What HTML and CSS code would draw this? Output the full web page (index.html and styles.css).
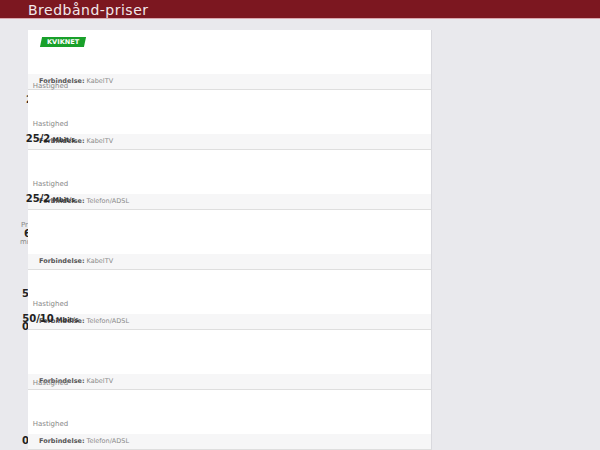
FILE: index.html
```html
<!DOCTYPE html>
<html lang="no">
<head>
    <meta charset="UTF-8">
    <meta name="viewport" content="width=device-width, initial-scale=1.0">
    <title>Bredbånd-priser</title>
    <link rel="stylesheet" href="styles.css">
</head>
<body>

<header class="topbar">
    <h1 class="title">Bredbånd-priser</h1>
</header>

<main class="offers">
    <article class="offer">
        <div class="offer-body"><span class="badge"><span>KVIKNET</span></span></div>
        <div class="offer-foot"><b>Forbindelse:</b> KabelTV</div>
        <div class="spec spec-low"><div class="spec-label">Hastighed</div></div>
        <span class="peek peek-c1">25/2</span>
    </article>

    <article class="offer">
        <div class="offer-body"></div>
        <div class="offer-foot"><b>Forbindelse:</b> KabelTV</div>
        <div class="spec">
            <div class="spec-label">Hastighed</div>
            <div class="spec-value">25/2<small> Mbit/s</small></div>
        </div>
    </article>

    <article class="offer">
        <div class="offer-body"></div>
        <div class="offer-foot"><b>Forbindelse:</b> Telefon/ADSL</div>
        <div class="spec">
            <div class="spec-label">Hastighed</div>
            <div class="spec-value">25/2<small> Mbit/s</small></div>
        </div>
    </article>

    <article class="offer">
        <div class="offer-body"></div>
        <div class="offer-foot"><b>Forbindelse:</b> KabelTV</div>
        <span class="peek peek-text peek-c4a">Pris</span>
        <span class="peek peek-c4b">649,-</span>
        <span class="peek peek-text peek-c4c">mnd</span>
    </article>

    <article class="offer">
        <div class="offer-body"></div>
        <div class="offer-foot"><b>Forbindelse:</b> Telefon/ADSL</div>
        <div class="spec">
            <div class="spec-label">Hastighed</div>
            <div class="spec-value">50/10<small> Mbit/s</small></div>
        </div>
        <span class="peek peek-c5a">5</span>
        <span class="peek peek-c5b">0</span>
    </article>

    <article class="offer">
        <div class="offer-body"></div>
        <div class="offer-foot"><b>Forbindelse:</b> KabelTV</div>
        <div class="spec spec-mid"><div class="spec-label">Hastighed</div></div>
    </article>

    <article class="offer">
        <div class="offer-body"></div>
        <div class="offer-foot"><b>Forbindelse:</b> Telefon/ADSL</div>
        <div class="spec"><div class="spec-label">Hastighed</div></div>
        <span class="peek peek-c7">0</span>
    </article>
</main>

</body>
</html>
```

FILE: styles.css
```css
* {
    margin: 0;
    padding: 0;
    box-sizing: border-box;
}

html, body {
    width: 100%;
    height: 100%;
    overflow: hidden;
}

body {
    font-family: "DejaVu Sans", sans-serif;
    background-color: #e9e9ed;
}

/* Top bar */
.topbar {
    height: 19px;
    background-color: #7c1720;
    border-bottom: 1px solid #d9a7ae;
}

.title {
    padding-left: 28px;
    height: 18px;
    font-size: 14px;
    font-weight: normal;
    line-height: 20px;
    letter-spacing: 0.5px;
    color: #f2e8ea;
}

/* Offer list */
.offers {
    display: flex;
    flex-direction: column;
    width: 404px;
    margin: 11px 0 0 28px;
}

.offer {
    position: relative;
    display: flex;
    flex-direction: column;
    background-color: #fff;
    border-right: 1px solid #d9d9de;
    border-bottom: 1px solid #dedede;
}

.offer-body {
    height: 44px;
    padding: 7px 0 0 13px;
    font-size: 6.6px;
    line-height: 10px;
}

.offer-foot {
    height: 15px;
    padding-left: 11px;
    font-size: 6.5px;
    line-height: 15px;
    color: #8a8a8a;
    background-color: #f6f6f7;
}

.offer-foot b {
    color: #555;
}

.badge {
    display: inline-block;
    vertical-align: top;
    height: 10px;
    padding: 0 6px;
    font-size: 6.6px;
    line-height: 10px;
    background-color: #19a02a;
    transform: skewX(-12deg);
}

.badge span {
    display: inline-block;
    vertical-align: top;
    font-weight: bold;
    color: #fff;
    transform: skewX(12deg);
}

/* Speed column, spilling over the cards */
.spec {
    position: absolute;
    top: 30px;
    left: -22px;
    width: 89px;
    text-align: center;
}

.spec-low {
    top: 52px;
}

.spec-mid {
    top: 49px;
}

.spec-label {
    font-size: 7px;
    line-height: 9px;
    color: #888;
}

.spec-value {
    margin-top: 4px;
    font-size: 10px;
    font-weight: bold;
    line-height: 12px;
    color: #222;
}

.spec-value small {
    font-size: 6.5px;
    color: #333;
}

/* Bits of the price column left behind the cards */
.peek {
    position: absolute;
    z-index: -1;
    font-size: 10px;
    font-weight: bold;
    line-height: 12px;
    color: #222;
    white-space: nowrap;
}

.peek-text {
    font-size: 7px;
    font-weight: normal;
    line-height: 9px;
    color: #888;
}

.peek-c1 { top: 64px; left: -2px; }
.peek-c4a { top: 11px; left: -7px; }
.peek-c4b { top: 18px; left: -4px; }
.peek-c4c { top: 28px; left: -8px; }
.peek-c5a { top: 18px; left: -6px; }
.peek-c5b { top: 51px; left: -6px; }
.peek-c7 { top: 45px; left: -6px; }
```
